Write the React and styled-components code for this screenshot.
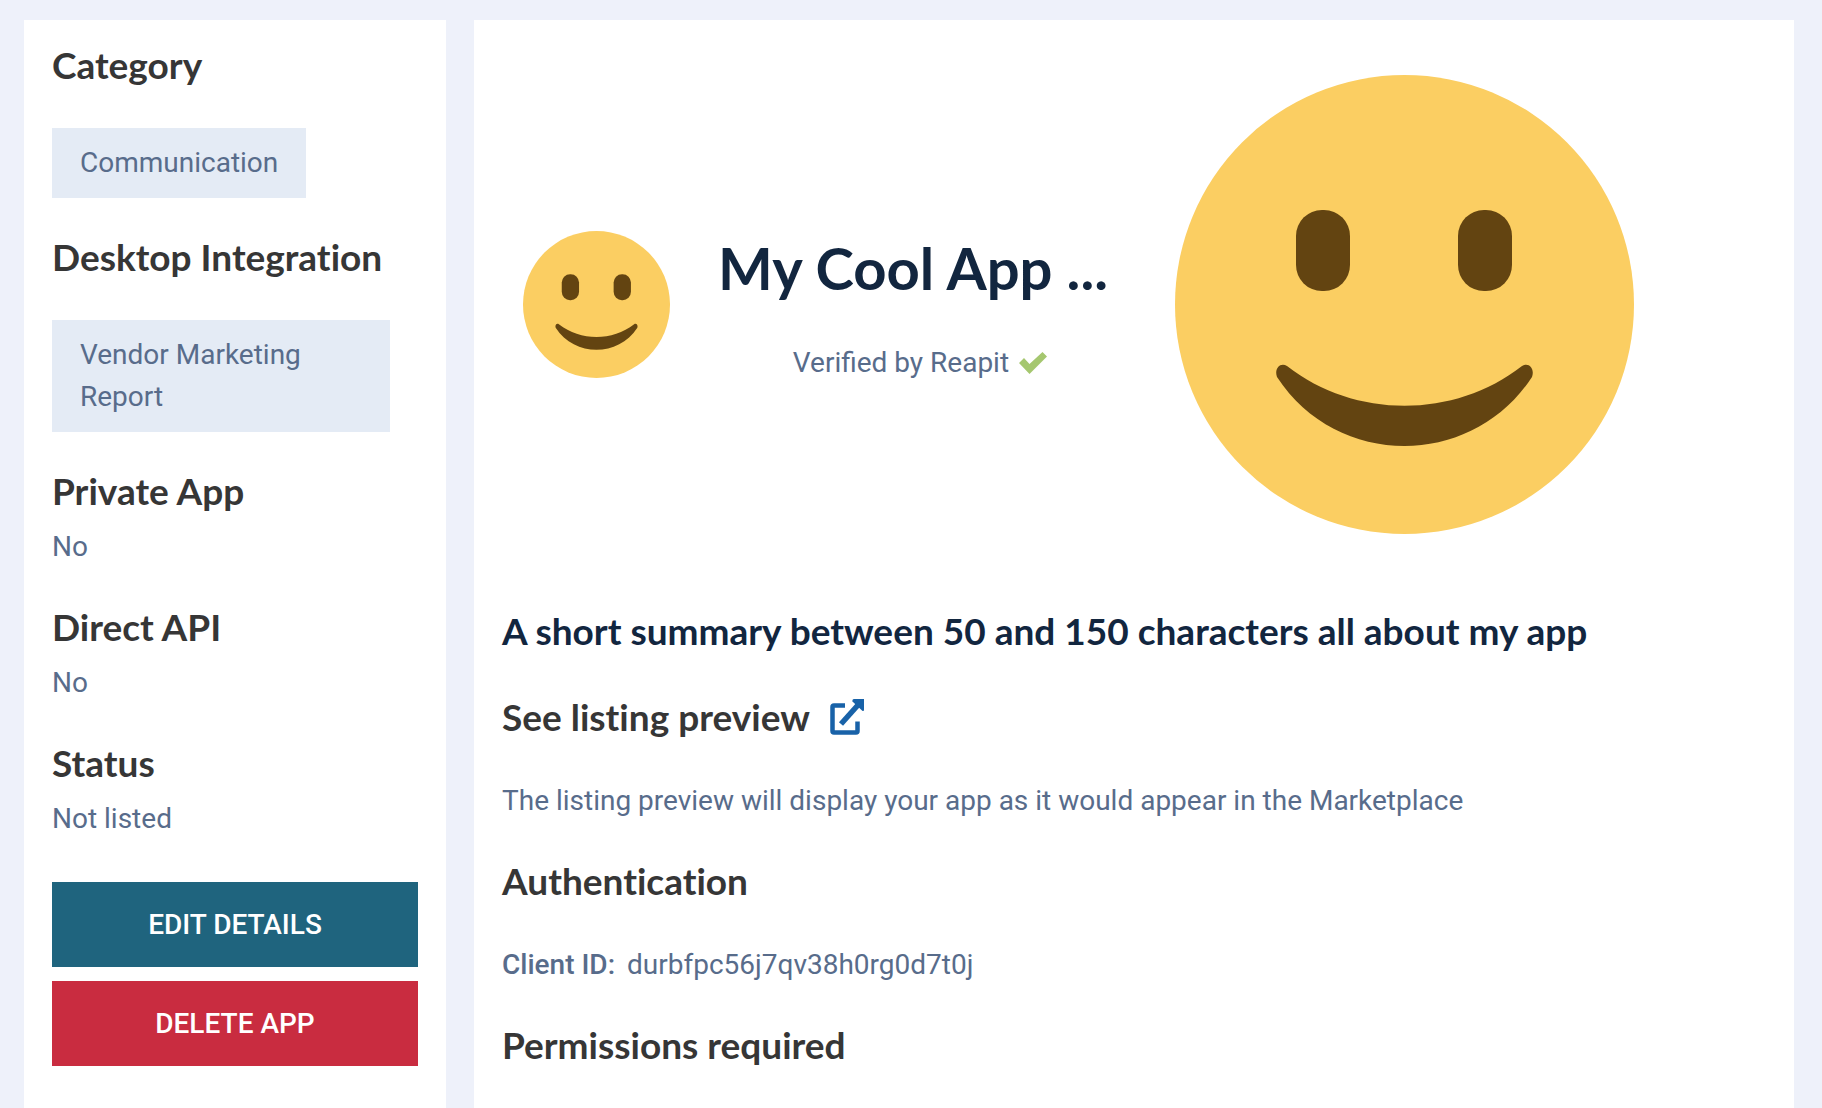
import React from 'react';
import styled, { createGlobalStyle } from 'styled-components';

const GlobalStyle = createGlobalStyle`
  *, *::before, *::after { box-sizing: border-box; }
  body {
    margin: 0;
    background: #eef1fa;
    color: #586c8b;
    font-family: Roboto, "Liberation Sans", sans-serif;
    font-size: 28px;
    line-height: 42px;
    overflow: hidden;
  }
`;

const Page = styled.div`
  display: grid;
  grid-template-columns: 422px minmax(0, 1fr);
  gap: 28px;
  height: 100vh;
  padding: 20px 28px 0 24px;
`;

const Panel = styled.div`
  background: #fff;
  padding: 24px 28px 28px;
  overflow: hidden;
`;

const Heading = styled.h2`
  margin: 0;
  color: ${(p) => (p.$dark ? '#12263f' : '#363636')};
  font-family: Lato, "Open Sans", sans-serif;
  font-size: 37px;
  font-weight: 700;
  font-variant-ligatures: none;
  line-height: 42px;
`;

const Group = styled.section`
  display: flex;
  flex-direction: column;
  align-items: flex-start;
  gap: ${(p) => (p.$tight ? '14px' : '42px')};
  margin-bottom: 38px;
`;

const Tag = styled.span`
  max-width: 338px;
  padding: 14px 28px;
  background: #e4ebf5;
`;

const Text = styled.p`
  margin: 0;
`;

const Actions = styled.div`
  display: grid;
  gap: 14px;
  padding-top: 4px;
`;

const Button = styled.button`
  height: 85px;
  border: 0;
  background: ${(p) => (p.$danger ? '#c92c40' : '#1f647e')};
  color: #fff;
  font: 500 28px/42px Roboto, "Liberation Sans", sans-serif;
  text-transform: uppercase;
  cursor: pointer;
`;

const Hero = styled.header`
  display: flex;
  align-items: center;
  padding: 31px 21px 76px;
`;

const Face = styled.svg`
  flex: none;
  width: ${(p) => p.$size}px;
  height: ${(p) => p.$size}px;
`;

const Intro = styled.div`
  display: flex;
  flex-direction: column;
  align-items: center;
  gap: 42px;
  margin: 0 67px 0 48px;
  padding-top: 10px;
`;

const Title = styled.h1`
  margin: 0;
  color: #12263f;
  font-family: Lato, "Open Sans", sans-serif;
  font-size: 58px;
  font-weight: 700;
  line-height: 64px;
  white-space: nowrap;
`;

const Verified = styled.p`
  display: flex;
  align-items: center;
  gap: 10px;
  margin: 0;
  padding-left: 14px;
`;

const Summary = styled.div`
  margin-bottom: 44px;
`;

const HeadingRow = styled.div`
  display: flex;
  align-items: center;
  gap: 20px;
`;

const PreviewLink = styled.a`
  display: flex;
  color: #1862a8;
`;

const Label = styled.strong`
  margin-right: 12px;
  font-weight: 500;
`;

function Smiley({ size, label }) {
  return (
    <Face $size={size} viewBox="0 0 459 459" role="img" aria-label={label}>
      <circle cx="229.5" cy="229.5" r="229.5" fill="#fbce62" />
      <g fill="#634411">
        <rect x="121" y="135" width="54" height="81" rx="26" />
        <rect x="283" y="135" width="54" height="81" rx="26" />
        <path d="M112 291C180 344 279 344 347 291C354 287 360 294 357 302C297 394 162 394 102 302C99 294 105 287 112 291Z" />
      </g>
    </Face>
  );
}

export default function App() {
  return (
    <>
      <GlobalStyle />
      <Page>
        <Panel as="aside">
          <Group>
            <Heading>Category</Heading>
            <Tag>Communication</Tag>
          </Group>
          <Group>
            <Heading>Desktop Integration</Heading>
            <Tag>Vendor Marketing Report</Tag>
          </Group>
          <Group $tight>
            <Heading>Private App</Heading>
            <Text>No</Text>
          </Group>
          <Group $tight>
            <Heading>Direct API</Heading>
            <Text>No</Text>
          </Group>
          <Group $tight>
            <Heading>Status</Heading>
            <Text>Not listed</Text>
          </Group>
          <Actions>
            <Button type="button">Edit details</Button>
            <Button type="button" $danger>Delete app</Button>
          </Actions>
        </Panel>
        <Panel as="main">
          <Hero>
            <Smiley size={147} label="App icon" />
            <Intro>
              <Title>My Cool App ...</Title>
              <Verified>
                Verified by Reapit
                <svg width="28" height="22" viewBox="0 0 28 22" aria-hidden="true">
                  <path d="M0 11L5 6L10.500 12L23.500 0L28 4.500L10.500 22Z" fill="#a5c76f" />
                </svg>
              </Verified>
            </Intro>
            <Smiley size={459} label="App featured image" />
          </Hero>
          <Summary>
            <Heading $dark>A short summary between 50 and 150 characters all about my app</Heading>
          </Summary>
          <Group>
            <HeadingRow>
              <Heading>See listing preview</Heading>
              <PreviewLink href="#preview" aria-label="Open listing preview">
                <svg width="34" height="36" viewBox="0 0 34 36" fill="none" aria-hidden="true">
                  <path d="M15 6.500H4Q2.500 6.500 2.500 8V32Q2.500 33.500 4 33.500H26Q27.500 33.500 27.500 32V22.500" stroke="currentColor" strokeWidth="4.500" />
                  <path d="M11 25L28 6" stroke="currentColor" strokeWidth="5.500" />
                  <path d="M24 0H34V10.500Q34 13 32 11.500L22.500 2.500Q22 0 24 0Z" fill="currentColor" />
                </svg>
              </PreviewLink>
            </HeadingRow>
            <Text>The listing preview will display your app as it would appear in the Marketplace</Text>
          </Group>
          <Group>
            <Heading>Authentication</Heading>
            <Text><Label>Client ID:</Label>durbfpc56j7qv38h0rg0d7t0j</Text>
          </Group>
          <Heading>Permissions required</Heading>
        </Panel>
      </Page>
    </>
  );
}
